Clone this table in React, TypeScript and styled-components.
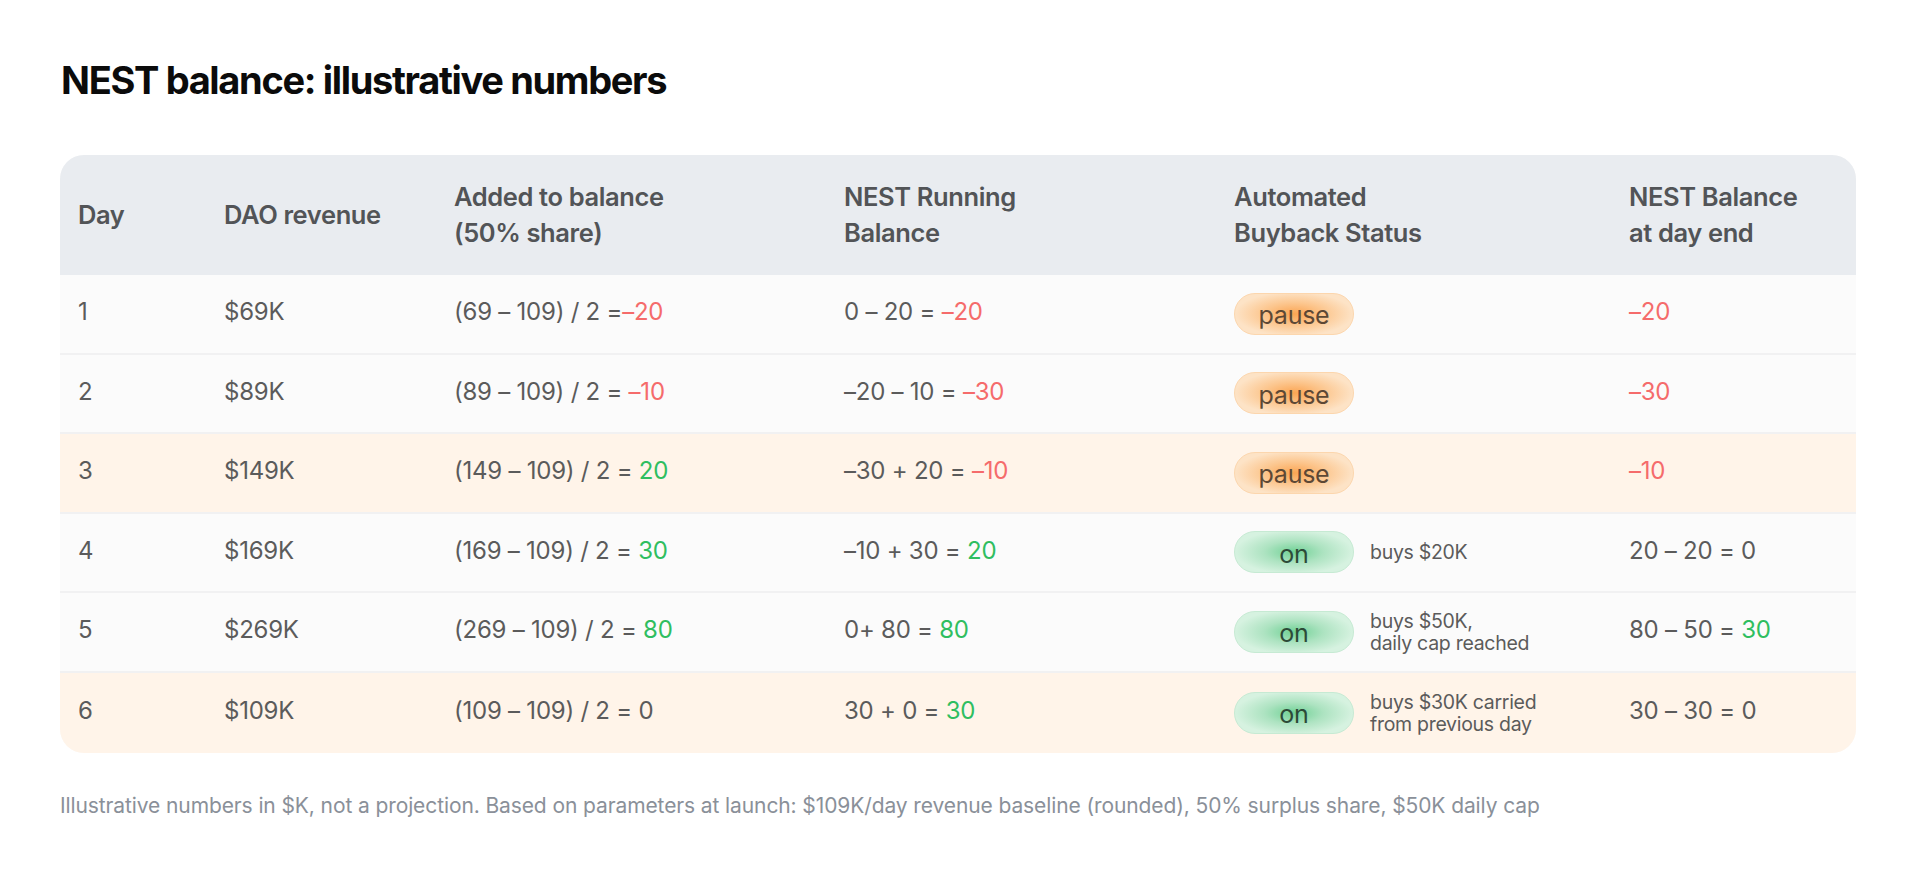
import styled, { createGlobalStyle } from "styled-components"

type Tone = "neg" | "pos"
type Part = string | { text: string; tone: Tone }

interface Row {
    day: string
    revenue: string
    added: Part[]
    running: Part[]
    status: "pause" | "on"
    note?: string[]
    end: Part[]
    warm?: boolean
}

const rows: Row[] = [
    { day: "1", revenue: "$69K", added: ["(69 – 109) / 2 =", { text: "–20", tone: "neg" }], running: ["0 – 20 = ", { text: "–20", tone: "neg" }], status: "pause", end: [{ text: "–20", tone: "neg" }] },
    { day: "2", revenue: "$89K", added: ["(89 – 109) / 2 = ", { text: "–10", tone: "neg" }], running: ["–20 – 10 = ", { text: "–30", tone: "neg" }], status: "pause", end: [{ text: "–30", tone: "neg" }] },
    { day: "3", revenue: "$149K", added: ["(149 – 109) / 2 = ", { text: "20", tone: "pos" }], running: ["–30 + 20 = ", { text: "–10", tone: "neg" }], status: "pause", end: [{ text: "–10", tone: "neg" }], warm: true },
    { day: "4", revenue: "$169K", added: ["(169 – 109) / 2 = ", { text: "30", tone: "pos" }], running: ["–10 + 30 = ", { text: "20", tone: "pos" }], status: "on", note: ["buys $20K"], end: ["20 – 20 = 0"] },
    { day: "5", revenue: "$269K", added: ["(269 – 109) / 2 = ", { text: "80", tone: "pos" }], running: ["0+ 80 = ", { text: "80", tone: "pos" }], status: "on", note: ["buys $50K,", "daily cap reached"], end: ["80 – 50 = ", { text: "30", tone: "pos" }] },
    { day: "6", revenue: "$109K", added: ["(109 – 109) / 2 = 0"], running: ["30 + 0 = ", { text: "30", tone: "pos" }], status: "on", note: ["buys $30K carried", "from previous day"], end: ["30 – 30 = 0"], warm: true },
]

const headers = ["Day", "DAO revenue", "Added to balance\n(50% share)", "NEST Running\nBalance", "Automated\nBuyback Status", "NEST Balance\nat day end"]

function renderParts(parts: Part[]) {
    return parts.map((p, i) =>
        typeof p === "string" ? <span key={i}>{p}</span> : <Value key={i} $tone={p.tone}>{p.text}</Value>
    )
}

export default function App() {
    return (
        <>
            <GlobalStyle />
            <Page>
                <Title>NEST balance: illustrative numbers</Title>
                <Table>
                    <HeaderRow>
                        {headers.map(h => (
                            <HeadCell key={h}>{h}</HeadCell>
                        ))}
                    </HeaderRow>
                    {rows.map(row => (
                        <BodyRow key={row.day} $warm={row.warm}>
                            <Cell>{row.day}</Cell>
                            <Cell>{row.revenue}</Cell>
                            <Cell>{renderParts(row.added)}</Cell>
                            <Cell>{renderParts(row.running)}</Cell>
                            <StatusCell>
                                <Pill $status={row.status}>{row.status}</Pill>
                                {row.note && (
                                    <Note>
                                        {row.note.map(line => <span key={line}>{line}</span>)}
                                    </Note>
                                )}
                            </StatusCell>
                            <Cell>{renderParts(row.end)}</Cell>
                        </BodyRow>
                    ))}
                </Table>
                <Footnote>
                    Illustrative numbers in $K, not a projection. Based on parameters at launch: $109K/day revenue baseline (rounded), 50% surplus share, $50K daily cap
                </Footnote>
            </Page>
        </>
    )
}

const GlobalStyle = createGlobalStyle`
    body {
        margin: 0;
        background: #ffffff;
        font-family: Inter, "Noto Sans", sans-serif;
    }
`

const Page = styled.main`
    padding: 56px 64px 60px 60px;
`

const Title = styled.h1`
    margin: 0 0 51px 1px;
    font-size: 38px;
    line-height: 48px;
    font-weight: 700;
    letter-spacing: -0.035em;
    color: #0b0b0b;
`

const Table = styled.div`
    border-radius: 24px;
    overflow: hidden;
    background: #fafafa;
`

const columns = "146px 230px 390px 390px 395px 1fr"

const HeaderRow = styled.div`
    display: grid;
    grid-template-columns: ${columns};
    align-items: center;
    height: 120px;
    background: #e9ecf0;
`

const HeadCell = styled.div`
    padding-left: 18px;
    white-space: pre-line;
    font-size: 25.5px;
    line-height: 36px;
    font-weight: 600;
    letter-spacing: -0.015em;
    color: #525457;
`

const BodyRow = styled.div<{ $warm?: boolean }>`
    display: grid;
    grid-template-columns: ${columns};
    align-items: center;
    box-sizing: border-box;
    height: 79.5px;
    background: ${p => (p.$warm ? "#fff4e9" : "#fbfbfb")};
    border-bottom: 2px solid #f1f1f2;

    &:last-child {
        border-bottom: none;
        height: 80px;
    }
`

const Cell = styled.div`
    padding-left: 18px;
    padding-bottom: 4px;
    font-size: 24px;
    font-weight: 400;
    letter-spacing: -0.01em;
    color: #5b5b5b;
    white-space: pre;
`

const Value = styled.span<{ $tone: Tone }>`
    color: ${p => (p.$tone === "neg" ? "#f56b6b" : "#2fbe60")};
`

const StatusCell = styled.div`
    display: flex;
    align-items: center;
    gap: 16px;
    padding-left: 18px;
`

const Pill = styled.span<{ $status: "pause" | "on" }>`
    display: flex;
    align-items: center;
    justify-content: center;
    width: 120px;
    height: 42px;
    box-sizing: border-box;
    padding-top: 3px;
    border-radius: 21px;
    font-size: 25px;
    letter-spacing: -0.01em;
    color: ${p => (p.$status === "pause" ? "#5d4835" : "#2d4a37")};
    border: 1px solid ${p => (p.$status === "pause" ? "#fcd6ad" : "#c6ead3")};
    background: ${p =>
        p.$status === "pause"
            ? "radial-gradient(ellipse 50% 55% at center, #fba553 0%, #fcc68e 50%, #fde3c6 100%)"
            : "radial-gradient(ellipse 50% 55% at center, #6fd195 0%, #ade3c1 50%, #d6f2e0 100%)"};
`

const Note = styled.div`
    display: flex;
    flex-direction: column;
    font-size: 19.5px;
    line-height: 22px;
    letter-spacing: -0.015em;
    color: #5b5b5b;
`

const Footnote = styled.p`
    margin: 40px 0 0;
    font-size: 21px;
    letter-spacing: -0.005em;
    color: #8a9099;
`
